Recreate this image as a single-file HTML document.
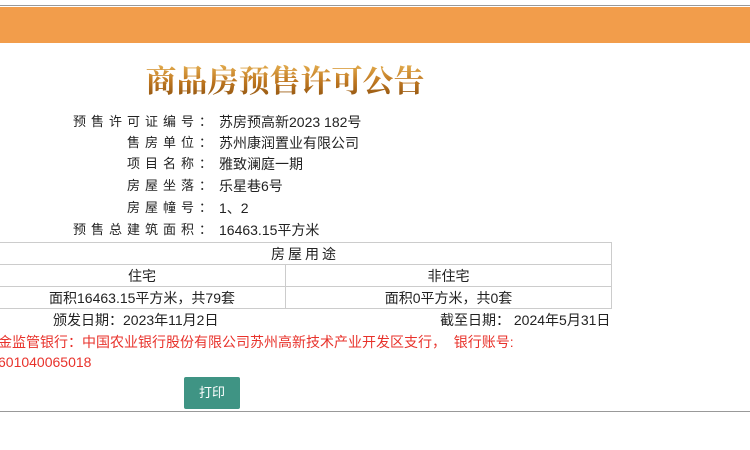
<!DOCTYPE html>
<html><head><meta charset="utf-8"><style>
*{margin:0;padding:0;box-sizing:border-box}
body{width:750px;height:450px;background:#fff;position:relative;overflow:hidden;font-family:"Liberation Sans","Noto Sans CJK SC",sans-serif;font-size:14px;color:#222}
.line{position:absolute;left:0;top:5px;width:750px;height:1px;background:#999}
.bar{position:absolute;left:0;top:7px;width:750px;height:36px;background:#f29d4b}
.title{position:absolute;left:100px;top:58px;width:370px;text-align:center;white-space:nowrap;font-family:"Noto Serif CJK SC",serif;font-size:31px;font-weight:bold;letter-spacing:0px;background:linear-gradient(#f0c060,#c07820 55%,#8a5010);-webkit-background-clip:text;background-clip:text;color:transparent;line-height:42px}
.row{position:absolute;left:0;height:20px;line-height:20px;white-space:nowrap}
.lab{position:absolute;right:538px;white-space:nowrap;letter-spacing:5px;margin-right:-5px;text-align:right;font-size:13px}
.val{position:absolute;left:219px;white-space:nowrap}
table{position:absolute;left:-2px;top:242px;width:614px;border-collapse:collapse}
td{border:1px solid #ccc;height:22px;text-align:center;font-size:14px}
.red{position:absolute;left:-2px;color:#e8322b;white-space:nowrap;font-size:14px}
.btn{position:absolute;left:184px;top:377px;width:56px;height:32px;background:#3f9484;color:#fff;border-radius:2px;text-align:center;line-height:32px;font-size:13px}
.bot{position:absolute;left:0;top:411px;width:750px;height:1px;background:#999}
</style></head><body>
<div class="line"></div><div class="bar"></div>
<div class="title">商品房预售许可公告</div>
<div class="row" style="top:112px;width:750px"><span class="lab">预售许可证编号：</span><span class="val">苏房预高新2023 182号</span></div>
<div class="row" style="top:133px;width:750px"><span class="lab">售房单位：</span><span class="val">苏州康润置业有限公司</span></div>
<div class="row" style="top:154px;width:750px"><span class="lab">项目名称：</span><span class="val">雅致澜庭一期</span></div>
<div class="row" style="top:176px;width:750px"><span class="lab">房屋坐落：</span><span class="val">乐星巷6号</span></div>
<div class="row" style="top:198px;width:750px"><span class="lab">房屋幢号：</span><span class="val">1、2</span></div>
<div class="row" style="top:220px;width:750px"><span class="lab">预售总建筑面积：</span><span class="val">16463.15平方米</span></div>
<table>
<tr><td colspan="2" style="letter-spacing:3px">房屋用途</td></tr>
<tr><td style="width:287px">住宅</td><td>非住宅</td></tr>
<tr><td>面积16463.15平方米，共79套</td><td>面积0平方米，共0套</td></tr>
</table>
<div class="row" style="top:310px;left:53px">颁发日期：2023年11月2日</div>
<div class="row" style="top:310px;left:440px">截至日期：&nbsp;2024年5月31日</div>
<div class="red" style="top:332px;line-height:20px">金监管银行：中国农业银行股份有限公司苏州高新技术产业开发区支行，&nbsp; 银行账号:</div>
<div class="red" style="top:352px;line-height:20px">601040065018</div>
<div class="btn">打印</div>
<div class="bot"></div>
</body></html>
